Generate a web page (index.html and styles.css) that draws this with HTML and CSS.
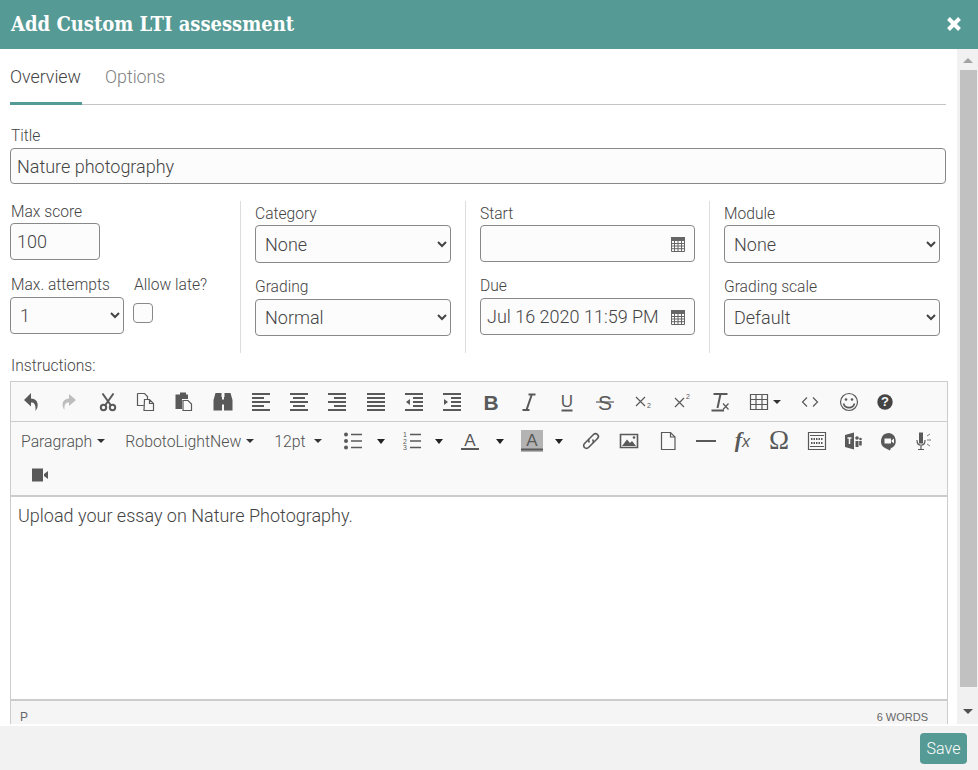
FILE: index.html
```html
<!DOCTYPE html>
<html lang="en">
<head>
<meta charset="utf-8">
<title>Add Custom LTI assessment</title>
<link rel="stylesheet" href="styles.css">
</head>
<body>
<header class="modal-head">
  <h1 class="modal-title">Add Custom LTI assessment</h1>
  <svg class="close" viewBox="0 0 16 16"><path d="M2.500 2.500l11 11M13.500 2.500l-11 11"/></svg>
</header>
<div class="modal-main">
  <main class="content">
    <nav class="tabs">
      <span class="tab tab-active">Overview</span>
      <span class="tab">Options</span>
    </nav>
    <label class="label label-title">Title</label>
    <input class="field field-title" type="text" value="Nature photography">
    <section class="grid">
      <div class="col col-first">
        <label class="label">Max score</label>
        <input class="field field-score" type="text" value="100">
        <div class="attempts">
          <div class="attempts-col">
            <label class="label">Max. attempts</label>
            <select class="field select select-attempts"><option>1</option></select>
          </div>
          <div class="late-col">
            <label class="label">Allow late?</label>
            <input class="check" type="checkbox">
          </div>
        </div>
      </div>
      <div class="col">
        <label class="label">Category</label>
        <select class="field select select-tall"><option>None</option></select>
        <label class="label label-second">Grading</label>
        <select class="field select"><option>Normal</option></select>
      </div>
      <div class="col">
        <label class="label">Start</label>
        <div class="date">
          <input class="field date-input" type="text" value="">
          <svg class="cal" viewBox="0 0 14 15"><path d="M.5.5h13v14H.5zM.5 3.500h13M.5 6.500h13M.5 9h13M.5 11.700h13M3.500 3v11M7 3v11M10.500 3v11"/><path class="cal-top" d="M0 0h14v3H0z"/></svg>
        </div>
        <label class="label label-second">Due</label>
        <div class="date">
          <input class="field date-input" type="text" value="Jul 16 2020 11:59 PM">
          <svg class="cal" viewBox="0 0 14 15"><path d="M.5.5h13v14H.5zM.5 3.500h13M.5 6.500h13M.5 9h13M.5 11.700h13M3.500 3v11M7 3v11M10.500 3v11"/><path class="cal-top" d="M0 0h14v3H0z"/></svg>
        </div>
      </div>
      <div class="col col-last">
        <label class="label">Module</label>
        <select class="field select select-tall"><option>None</option></select>
        <label class="label label-second">Grading scale</label>
        <select class="field select"><option>Default</option></select>
      </div>
    </section>
    <label class="label label-instructions">Instructions:</label>
    <section class="editor">
      <div class="toolbar toolbar-one">
        <svg class="ic" viewBox="0 0 20 20"><path class="f" d="M10 1 3 8l7 6.500v-4c3 0 5 1.500 4.500 8.500 3.500-4 3.500-12-4.500-12.500z"/></svg>
        <svg class="ic" viewBox="0 0 20 20"><path class="f-off" d="M10 2l7 6-7 6v-3.500c-3 0-5 1.500-4.500 7.500-3-4-3-11 4.500-11.500z"/></svg>
        <svg class="ic" viewBox="0 0 20 20"><path class="s2" d="M4.500 1.500l8.500 12M15.500 1.500L7 13.500"/><circle class="s2" cx="5.500" cy="15.500" r="2.700"/><circle class="s2" cx="14.500" cy="15.500" r="2.700"/></svg>
        <svg class="ic" viewBox="0 0 20 20"><path class="s1" d="M1.500 1.500h7l3 3v3M1.500 1.500v12h6M8.500 7.500h5l4 4v7h-9.500zM13.500 7.500v4h4"/></svg>
        <svg class="ic" viewBox="0 0 20 20"><path class="f" d="M6 .5h6v2h2v4.500H8v10H1.500V2.500H6z"/><path class="s1" d="M9 8.500h5l3.500 3.500v6.500H9z"/></svg>
        <svg class="ic" viewBox="0 0 20 20"><path class="f" d="M2.500 1h6v4h.5v13.500H.5V8zM11.500 1h6L19.500 8v10.500H11V5h.5zM9 7.500h2v5H9z"/></svg>
        <svg class="ic" viewBox="0 0 20 20"><path class="s2" d="M1 2h18M1 6h12M1 10h18M1 14h12M1 18h18"/></svg>
        <svg class="ic" viewBox="0 0 20 20"><path class="s2" d="M1 2h18M4 6h12M1 10h18M4 14h12M1 18h18"/></svg>
        <svg class="ic" viewBox="0 0 20 20"><path class="s2" d="M1 2h18M7 6h12M1 10h18M7 14h12M1 18h18"/></svg>
        <svg class="ic" viewBox="0 0 20 20"><path class="s2" d="M1 2h18M1 6h18M1 10h18M1 14h18M1 18h18"/></svg>
        <svg class="ic" viewBox="0 0 20 20"><path class="s2" d="M1 2h18M9 6h10M9 10h10M9 14h10M1 18h18"/><path class="f" d="M6 7v6l-4-3z"/></svg>
        <svg class="ic" viewBox="0 0 20 20"><path class="s2" d="M1 2h18M9 6h10M9 10h10M9 14h10M1 18h18"/><path class="f" d="M2 7v6l4-3z"/></svg>
        <svg class="ic" viewBox="0 0 20 20"><text class="t t-bold" x="10" y="17.500">B</text></svg>
        <svg class="ic" viewBox="0 0 20 20"><path class="s2" d="M13 2 7.500 18M9.500 2.500H16.500M3.500 18H10.500"/></svg>
        <svg class="ic" viewBox="0 0 20 20"><text class="t t-under" x="10" y="15">U</text><path class="s2" d="M4.500 18.500h11"/></svg>
        <svg class="ic" viewBox="0 0 20 20"><text class="t t-strike" x="10" y="17.500">S</text><path class="s1" d="M1 10h18"/></svg>
        <svg class="ic" viewBox="0 0 20 20"><path class="s1" d="M2 5l9 9M11 5l-9 9"/><text class="t t-tiny" x="15" y="16">2</text></svg>
        <svg class="ic" viewBox="0 0 20 20"><path class="s1" d="M3 6l9 9M12 6l-9 9"/><text class="t t-tiny" x="16" y="7">2</text></svg>
        <svg class="ic" viewBox="0 0 20 20"><path class="s2" d="M1.500 18.500h12.500M3.500 2h14"/><path class="s2" d="M10.500 2 7.500 16"/><path class="s1" d="M13 11.500l5.500 6M18.500 11.500l-5.500 6"/></svg>
        <div class="table-btn">
          <svg class="ic-plain" viewBox="0 0 20 20"><path class="s1" d="M1.500 2.500h17v15h-17zM1.500 7.500h17M1.500 12.500h17M7 2.500v15M13 2.500v15"/></svg>
          <span class="caret caret-table"></span>
        </div>
        <svg class="ic" viewBox="0 0 20 20"><path class="s1" d="M7 5.500L2.500 10 7 14.500M13 5.500l4.500 4.500-4.500 4.500"/></svg>
        <svg class="ic" viewBox="0 0 20 20"><circle class="s1" cx="10" cy="10" r="8.500"/><circle class="f" cx="7" cy="7.500" r="1.300"/><circle class="f" cx="13" cy="7.500" r="1.300"/><path class="s15" d="M4.500 11.500c1.500 5.500 9.500 5.500 11 0"/></svg>
        <svg class="ic ic-help" viewBox="0 0 20 20"><circle class="f-dark" cx="10" cy="10" r="7.700"/><text class="t t-help" x="10" y="14.300">?</text></svg>
      </div>
      <div class="toolbar toolbar-two">
        <div class="tb-line">
          <span class="menu">Paragraph<span class="caret"></span></span>
          <span class="menu menu-gap">RobotoLightNew<span class="caret"></span></span>
          <span class="menu menu-gap menu-size">12pt<span class="caret"></span></span>
          <svg class="ic2 m21" viewBox="0 0 20 20"><circle class="f" cx="3" cy="3.500" r="2"/><circle class="f" cx="3" cy="10" r="2"/><circle class="f" cx="3" cy="16.500" r="2"/><path class="s15" d="M8 3.500h11M8 10h11M8 16.500h11"/></svg>
          <span class="caret caret-big m14"></span>
          <svg class="ic2 m17" viewBox="0 0 20 20"><text class="t t-num" x="3" y="6">1</text><text class="t t-num" x="3" y="12.500">2</text><text class="t t-num" x="3" y="19">3</text><path class="s15" d="M8 3.500h11M8 10h11M8 16.500h11"/></svg>
          <span class="caret caret-big m13"></span>
          <svg class="ic2 m17" viewBox="0 0 20 20"><text class="t t-a" x="10" y="14.500">A</text><path class="s2" d="M1 18h18"/></svg>
          <span class="caret caret-big m16"></span>
          <svg class="ic2 ic-mark m17" viewBox="0 0 22 22"><text class="t t-a" x="11" y="16">A</text><path class="s2" d="M0 19.500h22"/></svg>
          <span class="caret caret-big m12"></span>
          <svg class="ic2 m18" viewBox="0 0 20 20"><path class="s15" d="M8.500 7.500l-5 5a2.800 2.800 0 0 0 4 4l4-4a2.800 2.800 0 0 0 0-4M11.500 12.500l5-5a2.800 2.800 0 0 0-4-4l-4 4a2.800 2.800 0 0 0 0 4"/></svg>
          <svg class="ic2 m18" viewBox="0 0 20 20"><path class="s15" d="M1.500 3.500h17v13h-17z"/><path class="f" d="M3 15l5-6.500 3 3.500 2-2 4 5z"/><circle class="f" cx="15" cy="6.500" r="1.300"/></svg>
          <svg class="ic2 m19" viewBox="0 0 20 20"><path class="s1" d="M3.500 1.500h9l4.500 4.500v12.500H3.500zM12.500 1.500V6H17"/></svg>
          <svg class="ic2 m18" viewBox="0 0 20 20"><path class="s2" d="M0 10h20"/></svg>
          <svg class="ic2 m16" viewBox="0 0 20 20"><text class="t t-f" x="6.500" y="16">f</text><text class="t t-x" x="14" y="16">x</text></svg>
          <svg class="ic2 m17" viewBox="0 0 20 20"><text class="t t-omega" x="10" y="18">Ω</text></svg>
          <svg class="ic2 m18" viewBox="0 0 20 20"><path class="s1" d="M1.500 1.500h17v17h-17z"/><path class="s-dots" d="M4 8h12M4 12h12"/><path class="s1" d="M3 4.500h14M3 15.500h14"/></svg>
          <svg class="ic2 m16" viewBox="0 0 20 20"><path class="f" d="M2 4l9-2.500v17L2 16z"/><circle class="f" cx="14" cy="7" r="1.800"/><circle class="f" cx="17.500" cy="8" r="1.300"/><path class="f" d="M12.500 10h3v6h-3zM16.200 10h2.500v4.500h-2.500z"/><path class="bar-white" d="M4.500 7h4M6.500 7v6"/></svg>
          <svg class="ic2 m16" viewBox="0 0 20 20"><path class="f" d="M10 2a8 8 0 0 0-3.500 15.200L11 19.500l.8-2.200A8 8 0 0 0 10 2z"/><path class="fw" d="M5.500 7.500h6.500v5H5.500zM12.500 9.500l2.500-2v5l-2.500-2z"/></svg>
          <svg class="ic2 m16" viewBox="0 0 20 20"><path class="f" d="M4 1.500h4v11H4z"/><path class="s1" d="M2 9c0 7 8 7 8 0M6 15v3.500M3 18.500h6"/><path class="s-thin" d="M12 5l3-2M12 9h4M12 13l3 2"/></svg>
        </div>
        <div class="tb-line tb-line-second">
          <svg class="ic2" viewBox="0 0 20 20"><path class="f" d="M2 3.500h11v13H2zM14 9l4-3v8l-4-3z"/></svg>
        </div>
      </div>
      <div class="editor-body">Upload your essay on Nature Photography.</div>
      <div class="status"><span>P</span><span class="words">6 WORDS</span></div>
    </section>
  </main>
  <aside class="scrollbar">
    <span class="arrow arrow-up"></span>
    <span class="thumb"></span>
    <span class="arrow arrow-down"></span>
  </aside>
</div>
<footer class="modal-foot">
  <button class="save" type="button">Save</button>
</footer>
</body>
</html>
```
FILE: styles.css
```css
* { box-sizing: border-box; }
html, body { height: 100%; }
body {
  margin: 0;
  height: 770px;
  overflow: hidden;
  display: flex;
  flex-direction: column;
  background: #fff;
  font-family: Roboto, "Liberation Sans", sans-serif;
  font-weight: 300;
  font-size: 16px;
  color: #444;
}
.modal-head {
  flex: 0 0 49px;
  background: #559a94;
  display: flex;
  align-items: center;
  justify-content: space-between;
  padding: 0 16px 2px 11px;
}
.modal-title {
  margin: 0;
  font-family: "DejaVu Serif", "Liberation Serif", serif;
  font-stretch: condensed;
  font-weight: 700;
  font-size: 20px;
  color: #fff;
}
.close { width: 16px; height: 16px; fill: none; stroke: #fff; stroke-width: 4; }
.modal-main { flex: 1 1 auto; min-height: 0; display: flex; overflow: hidden; }
.content { flex: 0 0 957px; min-width: 0; padding: 0 11px 0 10px; height: 800px; }
.tabs { height: 56px; display: flex; gap: 23px; border-bottom: 1px solid #c4c4c4; }
.tab { height: 55px; padding-top: 18px; line-height: 20px; font-size: 17.800px; color: #808080; }
.tab-active { color: #444; border-bottom: 3px solid #559a94; height: 56px; margin-bottom: -1px; width: 72px; }
.label { display: block; height: 20px; line-height: 22px; font-size: 15.600px; color: #444; }
.label-title { margin-top: 20px; margin-left: 1px; }
.field {
  display: block;
  height: 37px;
  border: 1px solid #888;
  border-radius: 4px;
  background-color: #fcfcfc;
  padding: 0 6px;
  font: 300 18px Roboto, "Liberation Sans", sans-serif;
  color: #444;
  outline: none;
}
.field-title { width: 936px; height: 36px; margin-top: 3px; }
.grid { display: grid; grid-template-columns: 231px 225px 244px 236px; height: 152px; margin-top: 17px; }
.col { padding: 2px 14px 0; border-right: 1px solid #ddd; }
.col-first { padding: 0 0 0 1px; }
.col-last { border-right: 0; padding-right: 6px; }
.field-score { width: 90px; margin: 2px 0 0 -1px; }
.attempts { display: flex; gap: 9px; margin-top: 14px; margin-left: -1px; }
.attempts .label { margin-left: 1px; }
.attempts-col { width: 114px; }
.select { width: 100%; margin-top: 2px; padding: 0 5px; }
.select-attempts { margin-top: 3px; }
.select-tall { height: 38px; }
.label-second { margin-top: 13px; }
.col .select + .label-second { margin-top: 13px; }
.col .label-second + .select { margin-top: 3px; }
.late-col { display: flex; flex-direction: column; }
.check { appearance: none; width: 20px; height: 20px; margin: 9px 0 0; border: 1px solid #888; border-radius: 4px; background: #fcfcfc; }
.date { position: relative; margin-top: 2px; }
.label-second + .date { margin-top: 3px; }
.date-input { width: 100%; height: 37px; padding: 0 30px 0 6px; }
.cal { position: absolute; right: 10px; top: 12px; width: 14px; height: 15px; fill: none; stroke: #666; stroke-width: 1; }
.cal-top { fill: #666; stroke: none; }
.label-instructions { margin-top: 2px; margin-left: 1px; }
.editor { width: 938px; margin-top: 6px; border: 1px solid #ccc; }
.toolbar { background: #f9f9f9; }
.toolbar-one { height: 40px; display: flex; align-items: center; padding: 0 0 0 1px; border-bottom: 1px solid #ccc; }
.ic { width: 20px; height: 20px; flex: none; margin: 0 9.150px; overflow: visible; }
.ic-help { margin-left: 7px; }
.table-btn { display: flex; align-items: center; gap: 4px; margin: 0 10px 0 10px; flex: none; }
.ic-plain { width: 20px; height: 20px; }
.toolbar-two { height: 75px; padding: 2px 0 0 10px; border-bottom: 2px solid #ccc; }
.tb-line { display: flex; align-items: center; height: 34px; }
.tb-line-second { padding-left: 9px; }
.menu { display: inline-flex; align-items: center; gap: 5px; font-size: 15.800px; color: #505050; flex: none; }
.menu-gap { margin-left: 20px; }
.menu-size { gap: 8px; }
.caret { display: inline-block; width: 0; height: 0; border: 4px solid transparent; border-top-color: #333; border-bottom: 0; flex: none; }
.caret-big { border-width: 5px 4.500px 0; border-top-color: #222; }
.ic2 { width: 20px; height: 20px; flex: none; overflow: visible; }
.ic-mark { width: 22px; height: 22px; background: #b3b3b3; }
.m12 { margin-left: 12px; }
.m13 { margin-left: 13px; }
.m14 { margin-left: 14px; }
.m16 { margin-left: 16px; }
.m17 { margin-left: 17px; }
.m18 { margin-left: 18px; }
.m19 { margin-left: 19px; }
.m21 { margin-left: 21px; }
.f { fill: #595959; }
.f-off { fill: #bdbdbd; }
.f-dark { fill: #444; }
.fw { fill: #f9f9f9; }
.s1, .s15, .s2, .s-dots, .s-thin, .bar-white { fill: none; stroke: #595959; }
.s1 { stroke-width: 1.200; }
.s15 { stroke-width: 1.600; }
.s2 { stroke-width: 2; }
.s-dots { stroke-width: 2; stroke-dasharray: 1.500 1; }
.s-thin { stroke-width: .8; }
.bar-white { stroke: #f9f9f9; stroke-width: 1.500; }
.t { fill: #595959; text-anchor: middle; font-family: "Liberation Sans", sans-serif; font-weight: 400; }
.t-bold { font-size: 21px; font-weight: 700; }
.t-under { font-size: 17px; }
.t-strike { font-size: 21px; }
.t-tiny { font-size: 7px; }
.t-help { fill: #f9f9f9; font-size: 13px; font-weight: 700; }
.t-num { font-size: 7px; }
.t-a { font-size: 17px; }
.t-f { font-family: "Liberation Serif", serif; font-size: 22px; font-style: italic; font-weight: 700; }
.t-x { font-size: 16px; font-style: italic; }
.t-omega { font-family: "Liberation Serif", serif; font-size: 27px; }
.editor-body { height: 204px; padding: 9px 7px; line-height: 20px; font-size: 18px; background: #fff; color: #444; border-bottom: 2px solid #ccc; }
.status { height: 40px; background: #f5f5f5; display: flex; justify-content: space-between; padding: 7px 19px 0 9px; font: 400 12px/18px "Liberation Sans", sans-serif; color: #666; }
.words { font-size: 11px; }
.scrollbar { flex: 0 0 21px; height: 100%; background: #f1f1f1; display: flex; flex-direction: column; align-items: center; padding-left: 1px; }
.arrow { width: 0; height: 0; border: 5px solid transparent; flex: none; }
.arrow-up { border-top: 0; border-bottom-color: #a3a3a3; margin-top: 9px; }
.thumb { width: 17px; height: 617px; background: #c1c1c1; margin-top: 7px; flex: none; }
.arrow-down { border-bottom: 0; border-top-color: #505050; margin-top: 22px; }
.modal-foot { flex: 0 0 44px; margin-top: 2px; background: #f2f2f2; display: flex; justify-content: flex-end; align-items: center; padding: 1px 11px 0 0; }
.save { height: 31px; width: 47px; border: 0; border-radius: 4px; background: #559a94; color: #fff; font: 300 16px Roboto, sans-serif; padding: 0; }
```
